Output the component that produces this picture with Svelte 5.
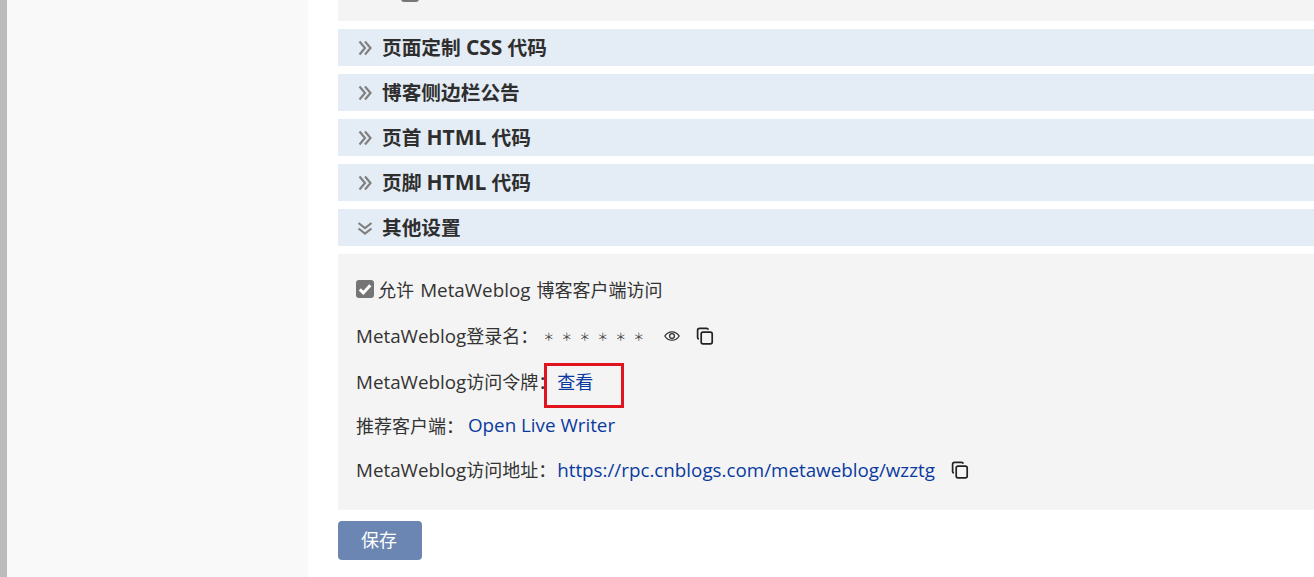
<script>
  const closed = [
    { a: '页面定制 ', en: 'CSS', b: ' 代码' },
    { a: '博客侧边栏公告', en: '', b: '' },
    { a: '页首 ', en: 'HTML', b: ' 代码' },
    { a: '页脚 ', en: 'HTML', b: ' 代码' }
  ];
</script>

{#snippet copyIcon()}
  <svg class="icon" width="18" height="18" viewBox="0 0 18 18" fill="none" stroke="#222" stroke-width="1.7">
    <rect x="5.2" y="5.200" width="11" height="11.600" rx="1.8" />
    <path d="M2.800 12.200c-.7-.3-1.200-1-1.200-1.800V3.400c0-1.100.9-2 2-2h7c.8 0 1.500.5 1.800 1.200" />
  </svg>
{/snippet}

{#snippet chevrons(open)}
  <svg class="chev" width="16" height="16" viewBox="0 0 16 16" fill="none" stroke="#808080" stroke-width="2.200">
    {#if open}
      <path d="M1.500 3l6.500 5 6.500-5M1.500 8.500l6.500 5 6.500-5" />
    {:else}
      <path d="M2.500 1.500l5.500 6.500-5.500 6.500M8 1.500l5.500 6.500-5.500 6.500" />
    {/if}
  </svg>
{/snippet}

<div class="page">
  <div class="scrollbar"></div>
  <aside class="sidebar"></aside>
  <main class="content">
    <div class="prev-panel">
      <div class="prev-text">
        <span>允许</span>
        <i class="prev-box"></i>
      </div>
    </div>

    {#each closed as t}
      <div class="section-head">
        {@render chevrons(false)}
        <span>{t.a}<span class="lat-head">{t.en}</span>{t.b}</span>
      </div>
    {/each}

    <div class="section-head">
      {@render chevrons(true)}
      <span>其他设置</span>
    </div>

    <div class="panel">
      <div class="row check-row">
        <span class="checkbox">
          <svg width="18" height="18" viewBox="0 0 18 18" fill="none">
            <path d="M3.800 9.400l3.500 3.500L14.300 5.300" stroke="#fff" stroke-width="3" />
          </svg>
        </span>
        <span>允许 <span class="lat">MetaWeblog</span> 博客客户端访问</span>
      </div>

      <div class="row login-row">
        <span><span class="lat">MetaWeblog</span>登录名：</span>
        <span class="stars">＊＊＊＊＊＊</span>
        <svg class="eye" width="16" height="16" viewBox="0 0 16 16" fill="none" stroke="#333" stroke-width="1.300">
          <path d="M.8 8c1.700-2.700 4-4.200 7.200-4.200s5.500 1.500 7.200 4.200c-1.700 2.700-4 4.200-7.200 4.200S2.500 10.700.8 8z" />
          <circle cx="8" cy="8" r="2.400" />
        </svg>
        {@render copyIcon()}
      </div>

      <div class="row token-row">
        <span><span class="lat">MetaWeblog</span>访问令牌：</span>
        <span class="token-link">
          <a href="#view">查看</a>
          <i class="highlight"></i>
        </span>
      </div>

      <div class="row client-row">
        <span>推荐客户端：</span>
        <a class="lat" href="#writer">Open Live Writer</a>
      </div>

      <div class="row url-row">
        <span><span class="lat">MetaWeblog</span>访问地址：</span>
        <a class="lat" href="#url">https://rpc.cnblogs.com/metaweblog/wzztg</a>
        {@render copyIcon()}
      </div>
    </div>

    <button class="save">保存</button>
  </main>
</div>

<style>
  :global(body) {
    margin: 0;
    background: #fff;
    overflow: hidden;
  }

  .page {
    display: flex;
    height: 577px;
    overflow: hidden;
    font-family: "Open Sans", "Noto Sans CJK SC", sans-serif;
    font-size: 18px;
    color: #333;
  }

  .scrollbar {
    width: 7px;
    background: #bbb;
  }

  .sidebar {
    width: 301px;
    background: #f9f9f9;
  }

  .content {
    flex: 1;
    padding-left: 30px;
    min-width: 0;
  }

  .lat {
    font-size: 18.8px;
  }

  .lat-head {
    font-size: 21px;
  }

  .prev-panel {
    height: 21px;
    margin-bottom: 8px;
    background: #f4f4f4;
    overflow: hidden;
  }

  .prev-text {
    display: flex;
    align-items: flex-start;
    gap: 5px;
    height: 3px;
    padding-left: 22px;
    overflow: hidden;
  }

  .prev-text span {
    margin-top: -21px;
    line-height: 24px;
    color: #333;
  }

  .prev-box {
    width: 18px;
    height: 18px;
    margin-top: -16px;
    border-radius: 3px;
    background: #777;
  }

  .section-head {
    display: flex;
    align-items: center;
    gap: 10px;
    height: 37px;
    margin-bottom: 8px;
    padding-left: 19px;
    background: #e4ecf6;
    font-size: 19.7px;
    font-weight: 700;
    color: #2e2e2e;
  }

  .section-head > span {
    margin-top: -2px;
    margin-left: -1px;
  }

  .chev {
    flex: none;
  }

  .panel {
    display: flex;
    flex-direction: column;
    height: 256px;
    box-sizing: border-box;
    padding: 12px 18px 0;
    background: #f4f4f4;
  }

  .row {
    display: flex;
    align-items: center;
    white-space: nowrap;
  }

  .check-row {
    height: 46px;
    word-spacing: 1.5px;
  }

  .login-row {
    height: 47px;
  }

  .token-row {
    height: 44px;
  }

  .client-row {
    height: 43px;
  }

  .url-row {
    height: 47px;
  }

  .checkbox {
    display: flex;
    flex: none;
    width: 18px;
    height: 18px;
    margin: 0 4px 0 0;
    border-radius: 3px;
    background: #757575;
  }

  /* small asterisks on an 18px pitch */
  .stars {
    margin-left: 5px;
    font-size: 11px;
    letter-spacing: 7px;
    color: #444;
  }

  .eye {
    margin-left: 13px;
  }

  .icon {
    margin-left: 16px;
    flex: none;
  }

  .client-row a {
    margin-left: 4px;
  }

  .url-row a {
    margin-left: 1px;
  }

  a {
    color: #0a3aa0;
    text-decoration: none;
  }

  .token-link {
    position: relative;
    margin-left: 1px;
  }

  .highlight {
    position: absolute;
    left: -13px;
    top: -5px;
    width: 80px;
    height: 45px;
    border: 3px solid #e0141f;
    box-sizing: border-box;
  }

  .save {
    display: block;
    width: 84px;
    height: 39px;
    margin-top: 11px;
    padding: 0 2px 3px 0;
    border: 0;
    border-radius: 4px;
    background: #6b86b3;
    color: #fff;
    font: inherit;
  }
</style>
